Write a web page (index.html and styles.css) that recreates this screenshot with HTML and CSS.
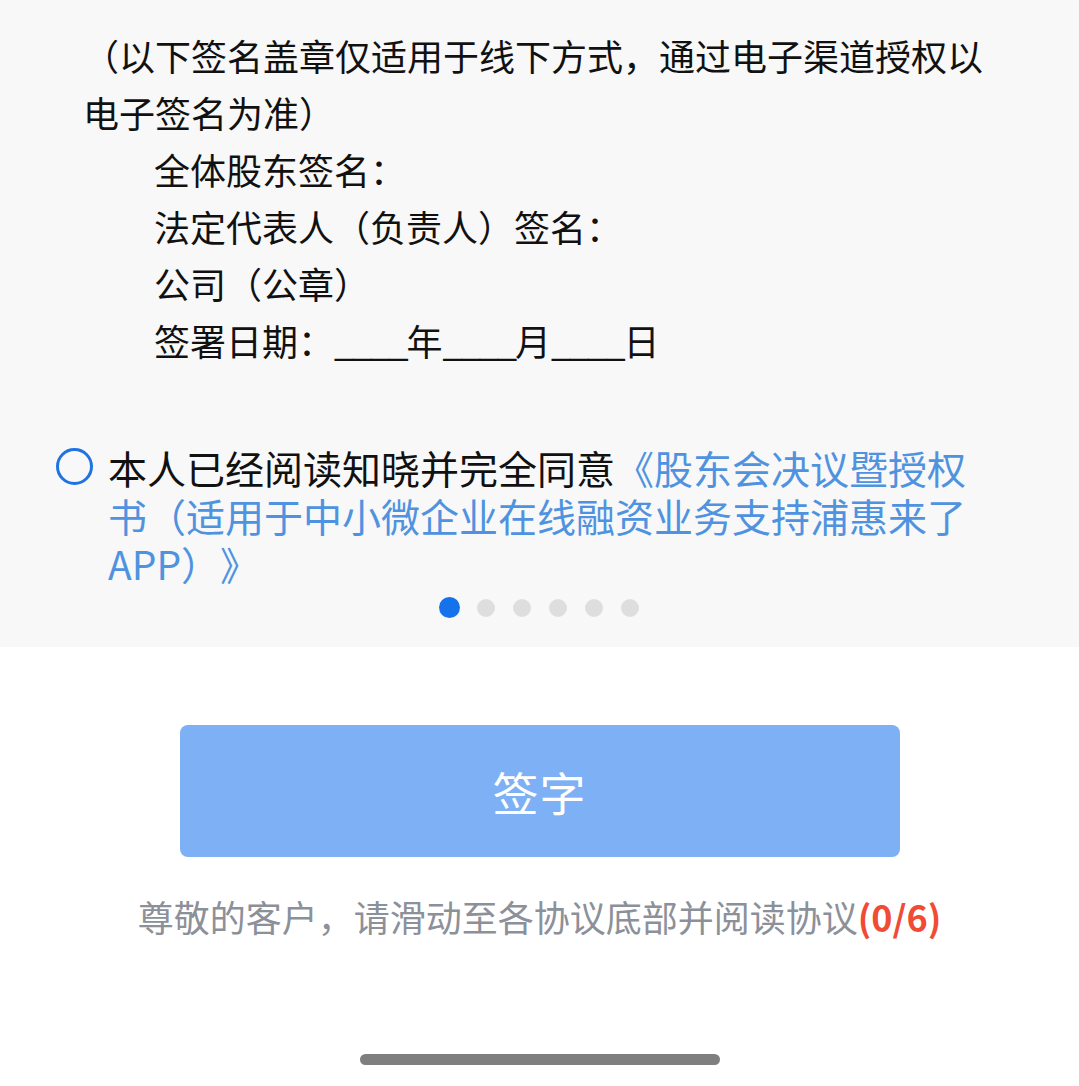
FILE: index.html
```html
<!DOCTYPE html>
<html lang="zh-CN">
<head>
<meta charset="utf-8">
<title>签字</title>
<link rel="stylesheet" href="styles.css">
</head>
<body>
<div class="page">
  <section class="doc">
    <div class="clauses">
      <p class="line">（以下签名盖章仅适用于线下方式，通过电子渠道授权以电子签名为准）</p>
      <p class="line indent">全体股东签名：</p>
      <p class="line indent">法定代表人（负责人）签名：</p>
      <p class="line indent">公司（公章）</p>
      <p class="line indent">签署日期：<span class="blank">____</span>年<span class="blank">____</span>月<span class="blank">____</span>日</p>
    </div>
    <label class="agree">
      <span class="radio"></span>
      <span class="agree-text">本人已经阅读知晓并完全同意<span class="link">《股东会决议暨授权书（适用于中小微企业在线融资业务支持浦惠来了APP）》</span></span>
    </label>
    <div class="dots">
      <span class="slot"><span class="dot active"></span></span>
      <span class="slot"><span class="dot"></span></span>
      <span class="slot"><span class="dot"></span></span>
      <span class="slot"><span class="dot"></span></span>
      <span class="slot"><span class="dot"></span></span>
      <span class="slot"><span class="dot"></span></span>
    </div>
  </section>
  <section class="actions">
    <button class="sign-btn" type="button">签字</button>
    <p class="hint">尊敬的客户，请滑动至各协议底部并阅读协议<span class="count">(0/6)</span></p>
    <div class="home-indicator"></div>
  </section>
</div>
</body>
</html>
```
FILE: styles.css
```css
* {
  box-sizing: border-box;
}

html, body {
  margin: 0;
  padding: 0;
  background: #ffffff;
}

body {
  font-family: "Noto Sans CJK SC", "Noto Sans", sans-serif;
  color: #111111;
  text-spacing-trim: space-all;
}

.page {
  width: 1079px;
  min-height: 1086px;
}

.doc {
  background: #f8f8f8;
  padding: 27px 0 29px 0;
}

.clauses {
  padding: 0 80px 0 83px;
}

.line {
  margin: 0;
  font-size: 36px;
  line-height: 57px;
}

.indent {
  padding-left: 71px;
}

.blank {
  letter-spacing: -2px;
}

.agree {
  display: flex;
  align-items: flex-start;
  margin-top: 74px;
  padding: 0 95px 0 56px;
}

.radio {
  flex: none;
  width: 37px;
  height: 37px;
  margin-top: 5px;
  margin-right: 15px;
  border: 3px solid #1f74e2;
  border-radius: 50%;
}

.agree-text {
  font-size: 39px;
  line-height: 48px;
  color: #111111;
}

.link {
  color: #4f93e0;
}

.dots {
  display: flex;
  justify-content: center;
  margin-top: 10px;
}

.slot {
  width: 36px;
  height: 21px;
  display: flex;
  align-items: center;
  justify-content: center;
}

.dot {
  width: 18px;
  height: 18px;
  border-radius: 50%;
  background: #dedede;
}

.dot.active {
  width: 21px;
  height: 21px;
  background: #1672ea;
}

.actions {
  display: flex;
  flex-direction: column;
  align-items: center;
  padding-top: 78px;
}

.sign-btn {
  width: 720px;
  height: 132px;
  border: none;
  border-radius: 8px;
  background: #7db0f4;
  color: #ffffff;
  font-family: "Noto Sans CJK SC", "Noto Sans", sans-serif;
  font-size: 46px;
  letter-spacing: 1px;
  padding: 0;
}

.hint {
  margin: 34px 0 0 0;
  font-size: 36px;
  line-height: 50px;
  color: #8c9099;
  white-space: nowrap;
}

.count {
  color: #ef4b35;
  font-weight: 700;
}

.home-indicator {
  margin-top: 113px;
  width: 360px;
  height: 11px;
  border-radius: 6px;
  background: #7f7f7f;
}
```
